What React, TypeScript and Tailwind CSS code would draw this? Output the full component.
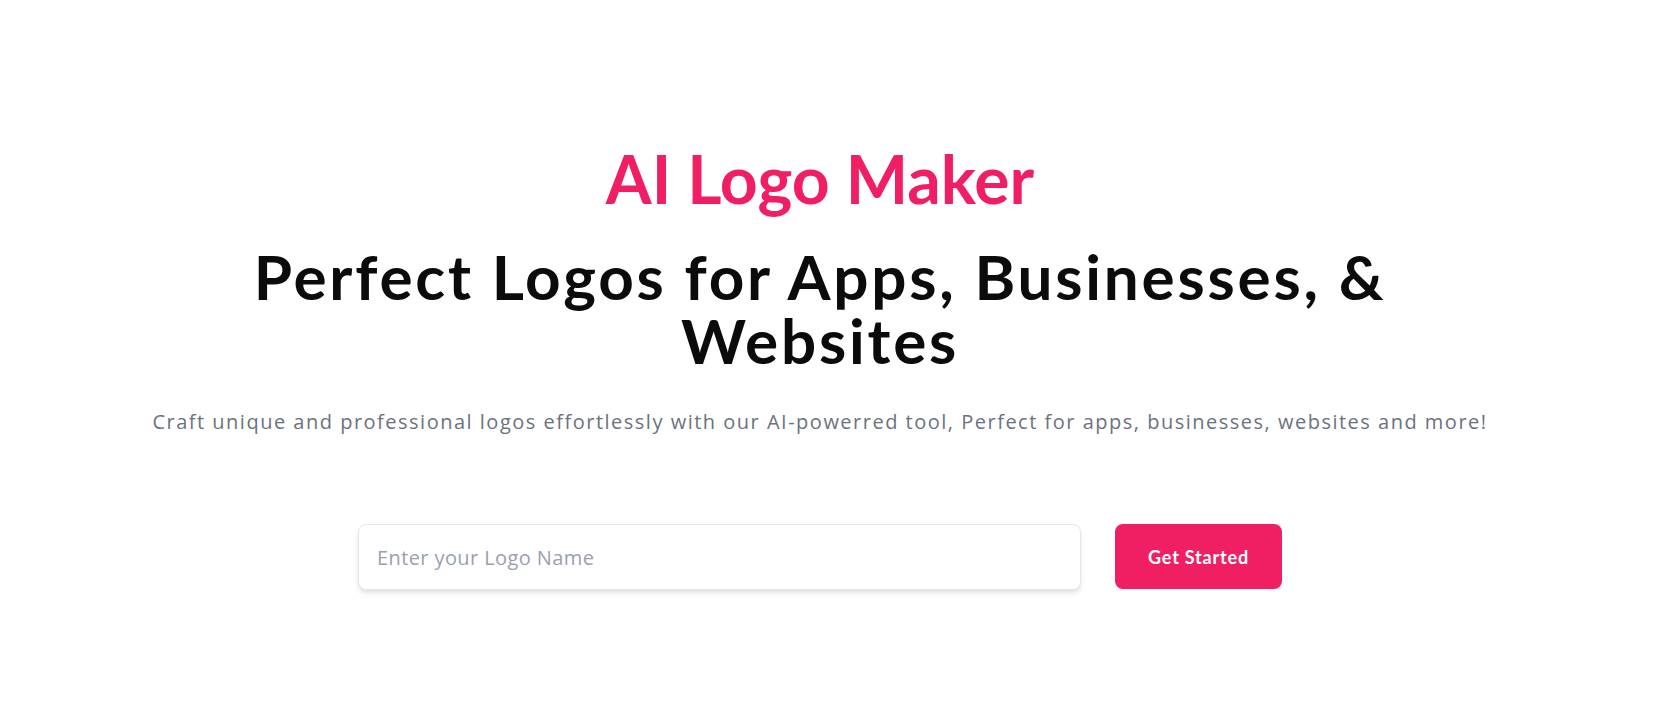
import { useState } from 'react'

export default function App() {
  const [name, setName] = useState('')

  return (
    <div className="min-h-screen bg-white font-['Lato',sans-serif] text-[#0b0b0b]">
      {/* Hero */}
      <section className="mr-5 flex flex-col items-center pt-[146px] text-center">
        <h2 className="text-[66px] font-bold leading-none text-[#f01f63]">AI Logo Maker</h2>
        <h1 className="mt-8 max-w-[1200px] text-[62px] font-bold leading-[64px] tracking-[0.045em]">
          Perfect Logos for Apps, Businesses, &amp; Websites
        </h1>
        <p className="mt-9 font-['Open_Sans',sans-serif] text-xl leading-7 tracking-[0.075em] text-[#6b7280]">
          Craft unique and professional logos effortlessly with our AI-powerred tool, Perfect for apps, businesses,
          websites and more!
        </p>

        {/* Name input + CTA */}
        <div className="mt-[88px] flex items-start gap-[34px]">
          <input
            value={name}
            onChange={(e) => setName(e.target.value)}
            placeholder="Enter your Logo Name"
            className="h-[66px] w-[723px] rounded-lg border border-gray-200 bg-white px-[18px] font-['Open_Sans',sans-serif] text-xl tracking-[0.02em] text-gray-800 shadow-md outline-none placeholder:text-gray-400"
          />
          <button className="h-[65px] w-[167px] rounded-lg bg-[#f01f63] text-lg font-bold tracking-[0.045em] text-white">
            Get Started
          </button>
        </div>
      </section>
    </div>
  )
}
